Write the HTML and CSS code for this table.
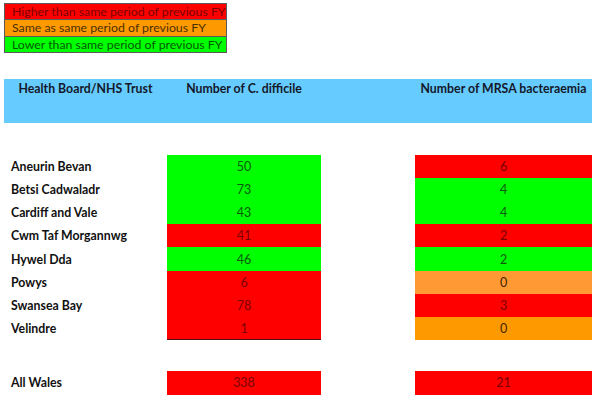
FILE: index.html
```html
<!DOCTYPE html>
<html lang="en">
<head>
<meta charset="utf-8">
<title>Health Board infections</title>
<link rel="stylesheet" href="styles.css">
</head>
<body>
<div class="page">
  <div class="legend">
    <div class="legend-row red">Higher than same period of previous FY</div>
    <div class="legend-row orange">Same as same period of previous FY</div>
    <div class="legend-row green">Lower than same period of previous FY</div>
  </div>

  <div class="header">
    <div class="hcell">Health Board/NHS Trust</div>
    <div class="hcell">Number of C. difficile</div>
    <div class="hcell"></div>
    <div class="hcell">Number of MRSA bacteraemia</div>
  </div>

  <div class="table">
    <div class="label">Aneurin Bevan</div><div class="val c-green">50</div><div></div><div class="val c-red">6</div>
    <div class="label">Betsi Cadwaladr</div><div class="val c-green">73</div><div></div><div class="val c-green">4</div>
    <div class="label">Cardiff and Vale</div><div class="val c-green">43</div><div></div><div class="val c-green">4</div>
    <div class="label">Cwm Taf Morgannwg</div><div class="val c-red">41</div><div></div><div class="val c-red">2</div>
    <div class="label">Hywel Dda</div><div class="val c-green">46</div><div></div><div class="val c-green">2</div>
    <div class="label">Powys</div><div class="val c-red">6</div><div></div><div class="val c-amber">0</div>
    <div class="label">Swansea Bay</div><div class="val c-red">78</div><div></div><div class="val c-red">3</div>
    <div class="label">Velindre</div><div class="val c-red last">1</div><div></div><div class="val c-orange">0</div>
  </div>

  <div class="table total">
    <div class="label">All Wales</div><div class="val c-red">338</div><div></div><div class="val c-red">21</div>
  </div>
</div>
</body>
</html>
```

FILE: styles.css
```css
html, body {
  margin: 0;
  padding: 0;
  background: #ffffff;
}

.page {
  padding: 3px 0 0 4px;
  font-family: "Lato", "Liberation Sans", sans-serif;
  color: #111111;
}

.legend {
  width: 221px;
  border: 1px solid #5a5a5a;
}

.legend-row {
  height: 15.33px;
  line-height: 15.33px;
  padding-left: 7px;
  font-size: 12.3px;
  white-space: nowrap;
  overflow: hidden;
}

.legend-row + .legend-row {
  border-top: 1px solid #5a5a5a;
}

.legend-row.red { background: #ff0000; color: #7c0000; }
.legend-row.orange { background: #ff9900; color: #4a3000; }
.legend-row.green { background: #00ff00; color: #005a00; }

.header {
  margin-top: 26px;
  width: 588px;
  height: 44px;
  background: #66ccff;
  display: grid;
  grid-template-columns: 163px 154px 94px 177px;
}

.hcell {
  padding-top: 3px;
  text-align: center;
  font-weight: 700;
  font-size: 12.3px;
  line-height: 14px;
  color: #14182a;
  white-space: nowrap;
}

.table {
  margin-top: 32px;
  display: grid;
  grid-template-columns: 163px 154px 94px 177px;
  grid-auto-rows: 23.125px;
}

.table.total {
  margin-top: 31px;
  grid-auto-rows: 24px;
}

.label {
  padding-left: 7px;
  font-weight: 700;
  font-size: 12.3px;
  display: flex;
  align-items: center;
  white-space: nowrap;
  color: #111111;
}

.val {
  display: flex;
  align-items: center;
  justify-content: center;
  font-size: 12.5px;
}

.c-green { background: #00ff00; color: #0a5a0a; }
.c-red { background: #ff0000; color: #7a0000; }
.c-amber { background: #ff9933; color: #3a2600; }
.c-orange { background: #ff9900; color: #3a2600; }

.val.last {
  box-shadow: inset 0 -1px 0 #4a1010;
}
```
